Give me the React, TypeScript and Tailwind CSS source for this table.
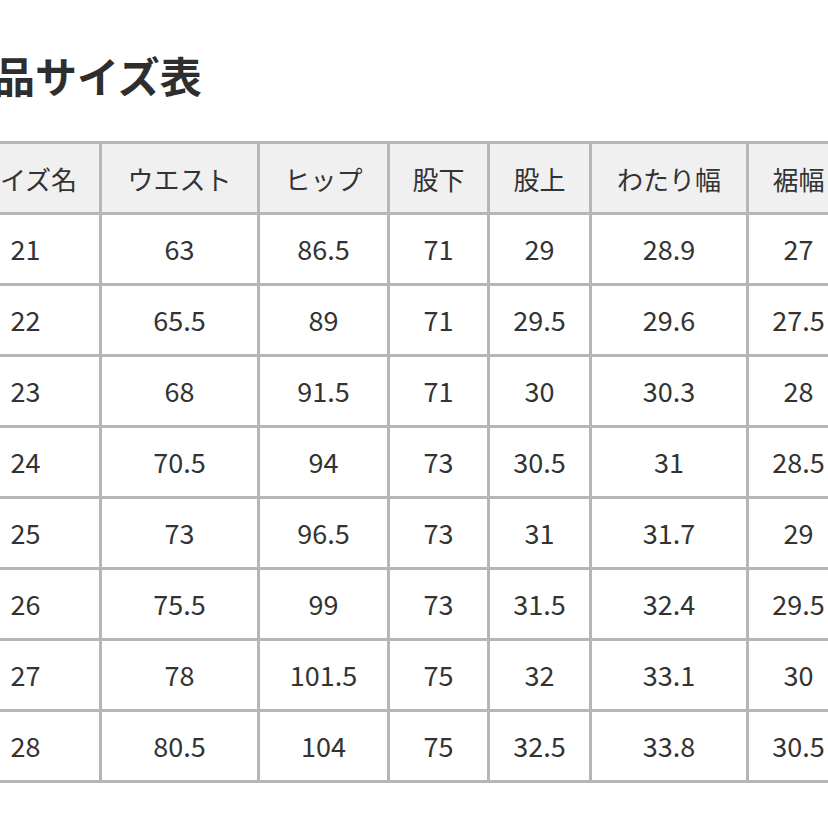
const headers = ["サイズ名", "ウエスト", "ヒップ", "股下", "股上", "わたり幅", "裾幅"]

const rows = [
  ["21", "63", "86.5", "71", "29", "28.9", "27"],
  ["22", "65.5", "89", "71", "29.5", "29.6", "27.5"],
  ["23", "68", "91.5", "71", "30", "30.3", "28"],
  ["24", "70.5", "94", "73", "30.5", "31", "28.5"],
  ["25", "73", "96.5", "73", "31", "31.7", "29"],
  ["26", "75.5", "99", "73", "31.5", "32.4", "29.5"],
  ["27", "78", "101.5", "75", "32", "33.1", "30"],
  ["28", "80.5", "104", "75", "32.5", "33.8", "30.5"],
]

export default function App() {
  return (
    <div
      className="w-[828px] h-[828px] overflow-hidden bg-white text-[#333]"
      style={{ fontFamily: '"Noto Sans CJK JP", "Noto Sans", sans-serif' }}
    >
      <div className="ml-[-51px] w-max">
        <h1 className="ml-[2px] mt-[49px] h-[52px] text-[42px] leading-[52px] font-bold text-[#2e2e2e] whitespace-nowrap">
          商品サイズ表
        </h1>
        <div className="mt-[40px] grid grid-cols-[147px_155px_127px_97px_99px_154px_99px] gap-[3px] p-[3px] bg-[#b6b6b6]">
          {headers.map((h) => (
            <div
              key={h}
              className="h-[68px] flex items-center justify-center bg-[#f0f0f0] text-[26px] whitespace-nowrap"
            >
              {h}
            </div>
          ))}
          {rows.map((r, i) =>
            r.map((v, j) => (
              <div
                key={i + "-" + j}
                className="h-[68px] flex items-center justify-center bg-white text-[27px]"
              >
                {v}
              </div>
            ))
          )}
        </div>
      </div>
    </div>
  )
}
